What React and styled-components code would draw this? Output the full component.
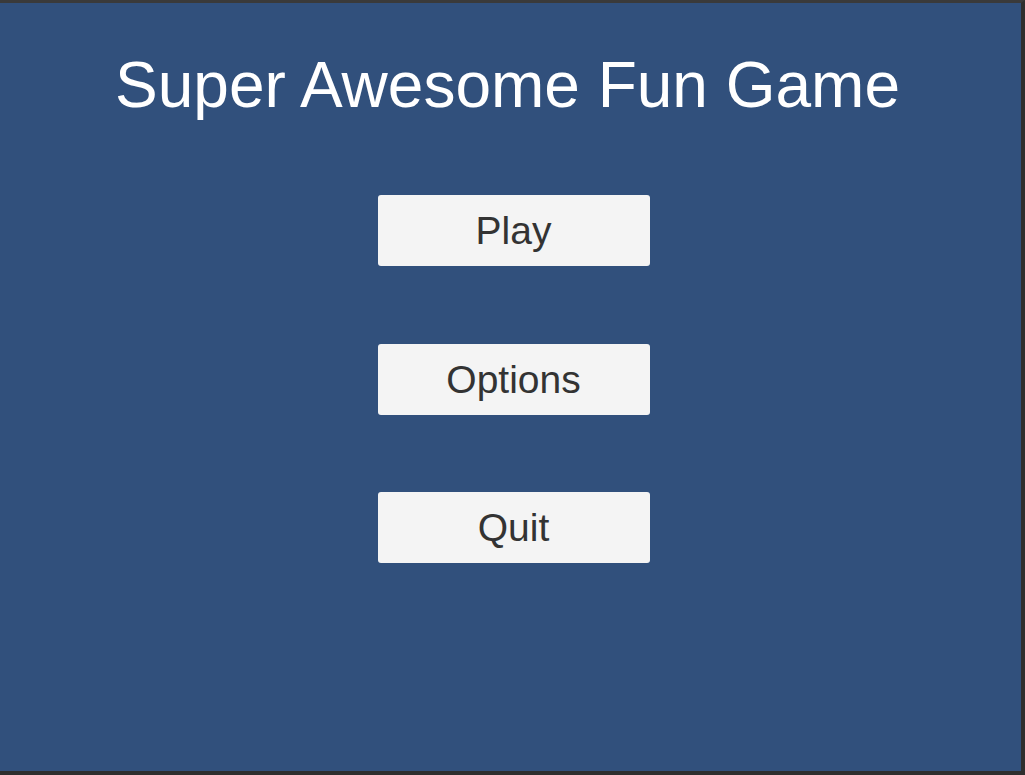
import React from 'react';
import styled, { createGlobalStyle } from 'styled-components';

const GlobalStyle = createGlobalStyle`
    html, body {
        margin: 0;
        padding: 0;
        background-color: #3a3a3a;
    }
    * {
        box-sizing: border-box;
    }
`

const Screen = styled.div`
    width: 1025px;
    height: 775px;
    background-color: #31507c;
    border-top: 3px solid #3a3a3a;
    border-right: 4px solid #2e2e2e;
    border-bottom: 4px solid #2e2e2e;
    display: flex;
    flex-direction: column;
    align-items: center;
    padding-top: 50px;
    font-family: "Liberation Sans", Arial, sans-serif;
`

const Title = styled.h1`
    margin: 0;
    font-size: 64px;
    line-height: 1;
    font-weight: 400;
    color: #ffffff;
    margin-left: -6px;
`

const Menu = styled.div`
    display: flex;
    flex-direction: column;
    gap: 77.5px;
    margin-top: 78px;
    margin-left: 6px;
`

const MenuButton = styled.button`
    width: 272px;
    height: 71px;
    background-color: #f4f4f4;
    border: 0;
    border-radius: 3px;
    color: #333333;
    font-family: inherit;
    font-size: 39px;
    line-height: 71px;
    padding: 0;
    cursor: pointer;
`

const items = ['Play', 'Options', 'Quit']

const App = () => {
    return (
        <>
            <GlobalStyle />
            <Screen>
                <Title>Super Awesome Fun Game</Title>
                <Menu>
                    {items.map(item => (
                        <MenuButton key={item}>{item}</MenuButton>
                    ))}
                </Menu>
            </Screen>
        </>
    )
}

export default App
